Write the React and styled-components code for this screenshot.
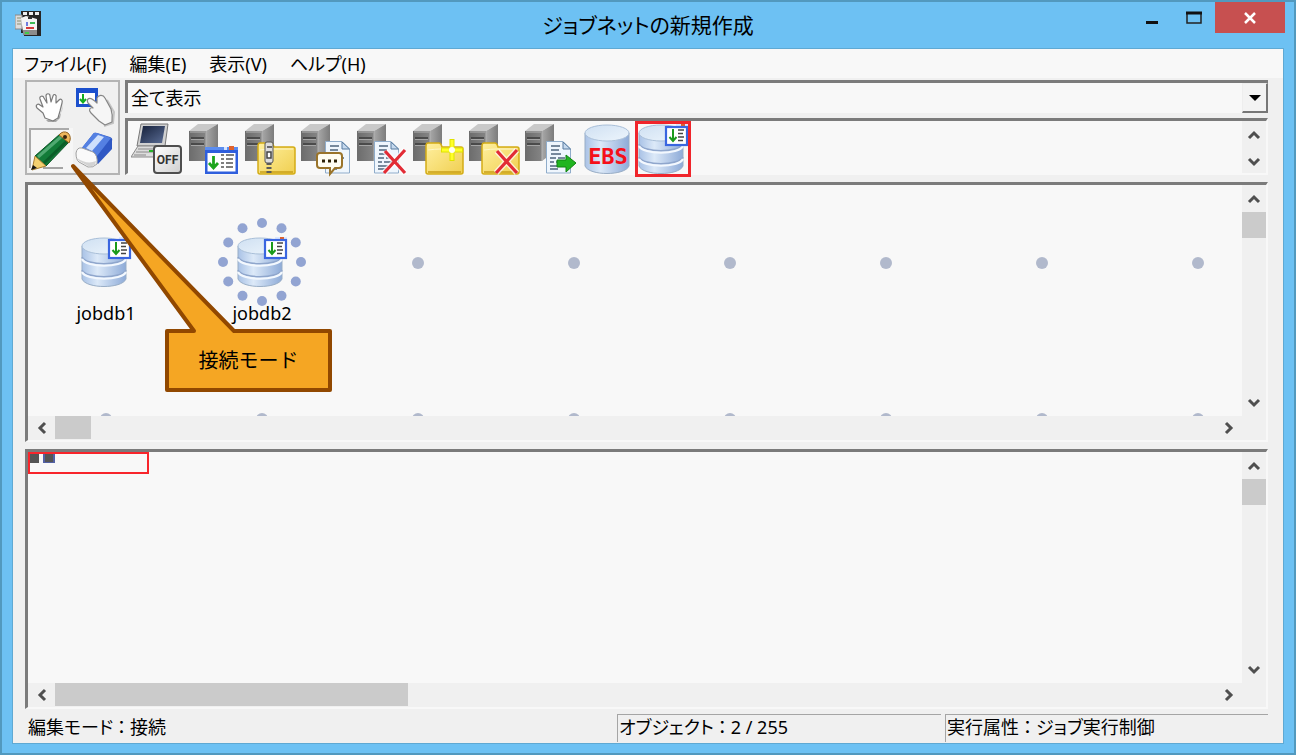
import React, { useState } from 'react';
import styled, { createGlobalStyle, css } from 'styled-components';

const GlobalStyle = createGlobalStyle`
    * {
        box-sizing : border-box;
    }

    body {
        margin : 0;
        font-family : 'Noto Sans', 'Noto Sans CJK JP', sans-serif;
        font-size : 18px;
        line-height : 24px;
        color : #000;
        font-feature-settings : 'palt';
    }

    button, select {
        margin : 0;
        padding : 0;
        border : 0;
        border-radius : 0;
        background : none;
        color : inherit;
        font : inherit;
        font-feature-settings : inherit;
    }

    svg {
        display : block;
    }
`;

const menus = ['ファイル(F)', '編集(E)', '表示(V)', 'ヘルプ(H)'];
const COLUMNS = 8;
const RING = Array.from({ length: 12 }, (_, i) => (i * Math.PI) / 6);

/* ---------- icons ---------- */

const Gradients = () => (
    <DefsSvg aria-hidden="true">
        <defs>
            <linearGradient id="side" x1="0" x2="1"><stop offset="0" stopColor="#a8a8a8" /><stop offset="1" stopColor="#7c7c7c" /></linearGradient>
            <linearGradient id="front" x1="0" x2="1"><stop offset="0" stopColor="#6c6c6c" /><stop offset="1" stopColor="#858585" /></linearGradient>
            <linearGradient id="folder" x1="0" x2="1" y2="1"><stop offset="0" stopColor="#fff0a0" /><stop offset="1" stopColor="#f0cf50" /></linearGradient>
            <linearGradient id="disk" x1="0" x2="1"><stop offset="0" stopColor="#a9c2e6" /><stop offset="0.35" stopColor="#dce9f8" /><stop offset="1" stopColor="#8eabd8" /></linearGradient>
            <linearGradient id="diskTop" x1="0" x2="1" y2="1"><stop offset="0" stopColor="#cfe0f2" /><stop offset="1" stopColor="#edf5fc" /></linearGradient>
            <linearGradient id="screen" x1="0" x2="1" y2="1"><stop offset="0" stopColor="#15203a" /><stop offset="1" stopColor="#5a6c94" /></linearGradient>
            <linearGradient id="key" x1="0" x2="1" y2="1"><stop offset="0" stopColor="#ffffff" /><stop offset="1" stopColor="#cfcfcf" /></linearGradient>
        </defs>
    </DefsSvg>
);

const Server = () => (
    <g>
        <path d="M2 10 11 3H31L19 10Z" fill="#c9c9c9" />
        <path d="M19 10 31 3V31L19 40Z" fill="url(#side)" />
        <path d="M2 10H19V40H2Z" fill="url(#front)" />
        <path d="M3 11H18M19 10V40" stroke="#b2b2b2" />
        <path d="M4 17H17M4 23H17" stroke="#3c3c3c" strokeWidth="1.4" />
        <path d="M4 18.5H17M4 24.5H17" stroke="#a5a5a5" />
    </g>
);

const JobWindow = () => (
    <g transform="translate(18 25)">
        <path d="M0 1H33V28H0Z" fill="#2f5fdd" />
        <path d="M0 1H33V4H0Z" fill="#5b8df0" />
        <path d="M19 1H22V4H19Z" fill="#d7e5ff" />
        <path d="M24 0H29V4H24Z" fill="#e0622c" />
        <path d="M2.5 7H30.5V25.5H2.5Z" fill="#fff" />
        <path d="M8.5 10V21M4 17 8.5 22 13 17" fill="none" stroke="#1da51d" strokeWidth="2.8" />
        <path d="M16 9H19M21 9H29M16 13H19M21 13H28M16 17H19M21 17H28M16 21H19M21 21H28" stroke="#555" strokeWidth="1.5" />
    </g>
);

const SmallWindow = () => (
    <g transform="translate(30 3)">
        <path d="M11 0H23V3H11Z" fill="#dbe7ff" />
        <path d="M16 0H20V2H16Z" fill="#e0622c" />
        <rect x="1" y="3" width="21" height="18" fill="#fff" stroke="#3a66e0" strokeWidth="2.2" />
        <path d="M8 5V16M4.500 13 8 17 11.500 13" fill="none" stroke="#1a9a1a" strokeWidth="2" />
        <path d="M13 6H19M13 9.500H18M13 13H19M13 16.500H18" stroke="#444" strokeWidth="1.6" />
    </g>
);

const Folder = () => (
    <g>
        <path d="M15 25Q15 22 17 22H28Q30 22 31 26H50Q52 26 52 28V51Q52 53 50 53H17Q15 53 15 51Z" fill="url(#folder)" stroke="#d3ac16" strokeWidth="1.5" />
        <path d="M17 29Q24 28 30 28H50" fill="none" stroke="#fff7c8" />
        <path d="M17 51H50" stroke="#c89f18" strokeWidth="1.5" />
    </g>
);

const Paper = ({ x }) => (
    <g transform={`translate(${x} 20)`}>
        <path d="M.5 .5H17L24.5 8V32H.5Z" fill="#eff6fd" stroke="#8facca" />
        <path d="M17 1V8H24.5Z" fill="#c5d9ee" stroke="#587b9f" />
        <path d="M5 5H14M5 9H13M5 13H15M4 17H10M12 17H19M4 21H8M10 21H18M4 25H14M4 28H12" stroke="#50657c" strokeWidth="1.3" />
    </g>
);

const Cross = () => (
    <g>
        <path d="M30 30 50 52M50 29 29 52" stroke="#fff" strokeWidth="6" opacity=".7" />
        <path d="M30 30 50 52M50 29 29 52" stroke="#e22c36" strokeWidth="3.2" />
    </g>
);

const Cylinder = ({ x, y, layered }) => (
    <g transform={`translate(${x} ${y})`}>
        <path d="M0 8V41C4 51 40 51 44 41V8Z" fill="url(#disk)" stroke="#99aec6" />
        {layered && (
            <>
                <path d="M0 19C4 28 40 28 44 19M0 32C4 41 40 41 44 32" fill="none" stroke="#8fa6cc" strokeWidth="1.6" />
                <path d="M0 21C4 30 40 30 44 21M0 34C4 43 40 43 44 34" fill="none" stroke="#f3f8fe" strokeWidth="2.2" />
            </>
        )}
        <ellipse cx="22" cy="8" rx="22" ry="8" fill="url(#diskTop)" stroke="#a9bfd8" />
    </g>
);

const Database = () => (
    <g>
        <Cylinder x={4} y={4} layered />
        <SmallWindow />
    </g>
);

const LaptopOff = () => (
    <g>
        <path d="M10 3H37L34 25H6Z" fill="#d1d1d1" stroke="#777" />
        <path d="M12 5H34L31 22H9Z" fill="url(#screen)" />
        <path d="M7 25H32L28 36H0Z" fill="#dcdcdc" stroke="#8a8a8a" />
        <path d="M7 28H25M5 31H23M3 34H15" stroke="#a5a5a5" strokeWidth="1.5" />
        <path d="M18 30H22" stroke="#27b427" strokeWidth="2" />
        <rect x="23" y="25" width="27" height="27" rx="3" fill="url(#key)" stroke="#4e4e4e" strokeWidth="2" />
        <text x="36.5" y="43" textAnchor="middle" fontSize="12" fontWeight="700" fill="#333" fontFamily="Roboto, sans-serif">OFF</text>
    </g>
);

const Zip = () => (
    <g>
        <path d="M26 22V53" stroke="#5b5b5b" strokeWidth="5" strokeDasharray="2 2" />
        <rect x="22" y="21" width="8" height="21" rx="2" fill="#ddd" stroke="#555" />
        <path d="M24 26H29M24 31V37H28V31Z" fill="#fff" stroke="#444" strokeWidth="1.5" />
    </g>
);

const Bubble = () => (
    <g>
        <path d="M21 32H40Q43 32 43 35V44Q43 47 40 47H36L31 53V47H21Q18 47 18 44V35Q18 32 21 32Z" fill="#fffdf2" stroke="#9a742a" strokeWidth="2" />
        <path d="M23 40H26M29 40H32M35 40H38" stroke="#2c2006" strokeWidth="3" />
    </g>
);

const Sparkle = () => (
    <g>
        <path d="M41 18V40M30 29H52" stroke="#dfe200" strokeWidth="5" />
        <path d="M41 19V39M31 29H51" stroke="#ffff28" strokeWidth="3" />
        <circle cx="41" cy="29" r="3" fill="#fffff0" />
    </g>
);

const palette = [
    { name: '停止マシン', icon: <LaptopOff /> },
    { name: 'ジョブ', icon: <g><Server /><JobWindow /></g> },
    { name: '圧縮', icon: <g><Server /><Folder /><Zip /></g> },
    { name: 'メッセージ', icon: <g><Server /><Paper x={26} /><Bubble /></g> },
    { name: 'ファイル削除', icon: <g><Server /><Paper x={19} /><Cross /></g> },
    { name: 'フォルダ作成', icon: <g><Server /><Folder /><Sparkle /></g> },
    { name: 'フォルダ削除', icon: <g><Server /><Folder /><Cross /></g> },
    { name: 'ファイル転送', icon: <g><Server /><Paper x={23} /><path d="M34 39H43V34L53 42 43 51V46H34Z" fill="#20b520" stroke="#118311" /></g> },
    {
        name: 'EBS',
        icon: (
            <g>
                <Cylinder x={6} y={4} />
                <text x="29" y="43" textAnchor="middle" fontSize="22" fontWeight="700" fill="#f5101a" fontFamily="'DejaVu Sans Mono', monospace">EBS</text>
            </g>
        ),
    },
    { name: 'データベース', icon: <Database /> },
];

const tools = [
    {
        name: '移動',
        icon: (
            <g>
                <path d="M17 35 28 35 33 26 34 19 31 33 27 37 19 37Z" fill="#a9a9a9" />
                <path d="M16 33 14 28 8 23C6 20 9 18 11 20L14 22 11 14C10 11 14 10 15 13L18 18 17 11C17 8 21 8 21 11L22 17 24 11C25 8 28 10 27 13L27 18 30 15C32 13 34 15 33 18L31 26 29 33 24 36Z" fill="#fff" stroke="#7b7b7b" strokeWidth="1.2" strokeLinejoin="round" />
            </g>
        ),
    },
    {
        name: '選択',
        icon: (
            <g>
                <rect x="3" y="3" width="22" height="19" fill="#1c50cd" />
                <rect x="6" y="8" width="16" height="11" fill="#fff" />
                <path d="M10 9V17M7 14 10 17.5 13 14" stroke="#14ac22" strokeWidth="2" fill="none" />
                <path d="M34 15 41 27 40 38 31 41" fill="none" stroke="#c4c4c4" strokeWidth="2" />
                <path d="M15 14C17 12 20 14 24 18L24 13C25 10 30 9 32 13L38 24Q40 30 39 37L32 40 26 36 18 28C15 25 17 22 20 23L15 18C14 16 14 15 15 14Z" fill="#f6f6f6" stroke="#858585" strokeWidth="1.2" strokeLinejoin="round" />
            </g>
        ),
    },
    {
        name: '接続',
        icon: (
            <g>
                <path d="M14 39H34" stroke="#a4a4a4" strokeWidth="2" />
                <path d="M6 27 31 5 40 13 17 37Z" fill="#137b38" stroke="#0b5425" />
                <path d="M9 28 33 7" stroke="#50a871" strokeWidth="3" />
                <path d="M15 34 38 12" stroke="#0c5e29" strokeWidth="3" />
                <path d="M30 6Q34 1 39 4Q43 8 40 14Z" fill="#edb65b" stroke="#93601c" />
                <circle cx="36" cy="8" r="2" fill="#3b250d" />
                <path d="M6 27 17 37 3 41Z" fill="#f4d070" stroke="#a87e32" />
                <path d="M4 36 8 39 2 41Z" fill="#161616" />
            </g>
        ),
    },
    {
        name: '削除',
        icon: (
            <g>
                <path d="M8 20 20 5Q21 3 24 4L37 8Q40 9 39 12V20L25 35 18 30Z" fill="#2f58c4" />
                <path d="M8 20 20 5Q21 3 24 4L38 9 24 27Z" fill="#5480e2" />
                <path d="M13 19 25 6 31 8 19 22Z" fill="#cfe0fc" />
                <path d="M3 24Q4 18 9 19L20 23Q25 26 24 35Q20 39 15 38L6 33Q3 31 3 24Z" fill="#fafafa" stroke="#a1a1a1" />
                <path d="M4 29Q14 36 23 32L22 36Q18 38 15 37L6 32Z" fill="#d3d3d3" />
            </g>
        ),
    },
];

const AppIcon = () => (
    <svg width="26" height="26" viewBox="0 0 26 26" aria-hidden="true">
        <path d="M6 0H26V25H9V22H6Z" fill="#262626" />
        <path d="M8 1H12V4H8ZM14 1H18V4H14ZM20 1H24V4H20Z" fill="#efefef" />
        <path d="M0 4H7V18H0Z" fill="#dcdcdc" stroke="#888" />
        <path d="M2 7H6M2 10H6M2 13H6" stroke="#8a8f70" />
        <path d="M6 7 11 5 22 8V20L8 21Z" fill="#f4f4f4" />
        <path d="M13 7H17" stroke="#333" strokeWidth="2" />
        <path d="M15 12H20" stroke="#3eba55" strokeWidth="2" />
        <path d="M11 13H13" stroke="#6f7de0" strokeWidth="4" />
        <path d="M11 17H19" stroke="#d33b3b" strokeWidth="2" />
        <path d="M8 19H22V24H8Z" fill="#8c8c8c" />
        <path d="M10 22H14" stroke="#41ca48" strokeWidth="2" />
    </svg>
);

const Chevron = ({ turn = 0 }) => (
    <svg width="16" height="16" viewBox="0 0 16 16" aria-hidden="true">
        <path d="M3 11 8 6 13 11" fill="none" stroke="#4f4f4f" strokeWidth="3" transform={`rotate(${turn} 8 8)`} />
    </svg>
);

/* ---------- parts ---------- */

const VerticalBar = ({ thumb }) => (
    <VBar>
        <ScrollButton type="button" aria-label="上へ"><Chevron /></ScrollButton>
        <Track>{thumb && <VThumb />}</Track>
        <ScrollButton type="button" aria-label="下へ"><Chevron turn={180} /></ScrollButton>
    </VBar>
);

const HorizontalBar = ({ length }) => (
    <HBar>
        <ScrollButton type="button" aria-label="左へ"><Chevron turn={-90} /></ScrollButton>
        <Track><HThumb $length={length} /></Track>
        <ScrollButton type="button" aria-label="右へ"><Chevron turn={90} /></ScrollButton>
    </HBar>
);

const JobNode = ({ label, active }) => (
    <Node>
        <NodeSvg viewBox="0 0 56 56" aria-hidden="true">
            {active && RING.map((a) => (
                <circle key={a} cx={28 + 39 * Math.cos(a)} cy={28 + 39 * Math.sin(a)} r="5" fill="#92a4d2" />
            ))}
            <Database />
        </NodeSvg>
        <NodeLabel>{label}</NodeLabel>
    </Node>
);

const Status = ({ name, value, sunken }) => (
    <StatusText $sunken={sunken}>{name}<Colon>：</Colon>{value}</StatusText>
);

const App = () => {
    const [tool, setTool] = useState(2);
    const [part, setPart] = useState(9);

    return (
        <WindowFrame>
            <GlobalStyle />
            <Gradients />
            <TitleBar>
                <TitleIcon><AppIcon /></TitleIcon>
                <Title>ジョブネットの新規作成</Title>
                <WindowButtons>
                    <WindowButton type="button" aria-label="最小化">
                        <svg width="16" height="16" viewBox="0 0 16 16"><path d="M2 12.5H14" stroke="#111" strokeWidth="3" /></svg>
                    </WindowButton>
                    <WindowButton type="button" aria-label="最大化">
                        <svg width="16" height="16" viewBox="0 0 16 16"><path d="M1 3V13H15V3" fill="none" stroke="#222" strokeWidth="1.5" /><path d="M0 3H16" stroke="#111" strokeWidth="3" /></svg>
                    </WindowButton>
                    <WindowButton type="button" aria-label="閉じる" $close>
                        <svg width="14" height="14" viewBox="0 0 14 14"><path d="M2 2 12 12M12 2 2 12" stroke="#fff" strokeWidth="2.5" /></svg>
                    </WindowButton>
                </WindowButtons>
            </TitleBar>
            <Client>
                <MenuBar>
                    {menus.map((menu) => <button type="button" key={menu}>{menu}</button>)}
                </MenuBar>
                <Workspace>
                    <ToolArea>
                        <ToolPad>
                            {tools.map((item, i) => (
                                <ToolButton type="button" key={item.name} aria-label={item.name} $pressed={tool === i} onClick={() => setTool(i)}>
                                    <svg width="42" height="42" viewBox="0 0 42 42">{item.icon}</svg>
                                </ToolButton>
                            ))}
                        </ToolPad>
                        <PaletteArea>
                            <SelectBox>
                                <select aria-label="表示" defaultValue="all">
                                    <option value="all">全て表示</option>
                                </select>
                                <SelectArrow aria-hidden="true">
                                    <svg width="12" height="6" viewBox="0 0 12 6"><path d="M0 0H12L6 6Z" fill="#000" /></svg>
                                </SelectArrow>
                            </SelectBox>
                            <Palette>
                                <PaletteItems>
                                    {palette.map((item, i) => (
                                        <PaletteButton type="button" key={item.name} aria-label={item.name} $selected={part === i} onClick={() => setPart(i)}>
                                            <svg width="56" height="56" viewBox="0 0 56 56">{item.icon}</svg>
                                        </PaletteButton>
                                    ))}
                                </PaletteItems>
                                <VerticalBar />
                            </Palette>
                        </PaletteArea>
                    </ToolArea>
                    <Pane>
                        <Canvas>
                            <JobNode label="jobdb1" />
                            <JobNode label="jobdb2" active />
                            {Array.from({ length: COLUMNS * 2 - 2 }, (_, i) => <GridPoint key={i}><Dot /></GridPoint>)}
                        </Canvas>
                        <VerticalBar thumb />
                        <HorizontalBar length="36px" />
                    </Pane>
                    <Pane>
                        <Overview>
                            <ViewPort>
                                <MiniNode />
                                <MiniNode $active />
                            </ViewPort>
                        </Overview>
                        <VerticalBar thumb />
                        <HorizontalBar length="30.4%" />
                    </Pane>
                </Workspace>
                <StatusBar>
                    <Status name="編集モード" value="接続" />
                    <Status name="オブジェクト" value="2 / 255" sunken />
                    <Status name="実行属性" value="ジョブ実行制御" sunken />
                </StatusBar>
                <Callout>
                    <svg width="262" height="230" viewBox="0 0 262 230" aria-hidden="true">
                        <path d="M97 169H124L3 4 164 169H260V228H97Z" fill="#f5a623" stroke="#914800" strokeWidth="4" strokeLinejoin="round" />
                    </svg>
                    <CalloutText>接続モード</CalloutText>
                </Callout>
            </Client>
        </WindowFrame>
    );
};

export default App;

const DefsSvg = styled.svg`
    position : absolute;
    width : 0;
    height : 0;
`;

const WindowFrame = styled.div`
    display : flex;
    flex-direction : column;
    height : 100vh;
    padding : 0 10px 9px;
    border : 2px solid #5299be;
    background : #6dc1f3;
`;

const TitleBar = styled.header`
    display : grid;
    grid-template-columns : 1fr auto 1fr;
    flex : none;
    height : 46px;
`;

const TitleIcon = styled.div`
    padding : 9px 3px;
`;

const Title = styled.h1`
    align-self : center;
    margin : 0;
    font-size : 21px;
    font-weight : 400;
`;

const WindowButtons = styled.div`
    display : flex;
    justify-content : flex-end;
    align-items : flex-start;
    margin-right : -1px;
`;

const WindowButton = styled.button`
    display : flex;
    align-items : center;
    justify-content : center;
    width : 42px;
    height : 31px;

    ${({ $close }) => $close && css`
        width : 70px;
        background : #c75050;
    `}
`;

const Client = styled.main`
    position : relative;
    display : flex;
    flex-direction : column;
    flex : 1;
    min-height : 0;
    border : 1px solid #5fa9d3;
    background : #f0f0f0;
`;

const MenuBar = styled.nav`
    display : flex;
    flex : none;
    gap : 23px;
    height : 29px;
    padding : 2px 11px;
    background : #f8f8f8;
`;

const Workspace = styled.div`
    display : flex;
    flex-direction : column;
    flex : 1;
    gap : 7px;
    min-height : 0;
    padding : 2px 15px 0 12px;
`;

const ToolArea = styled.div`
    display : flex;
    flex : none;
    gap : 5px;
    height : 95px;
`;

const ToolPad = styled.div`
    display : grid;
    grid-template-columns : 44px 44px;
    grid-template-rows : 44px 44px;
    place-content : center;
    flex : none;
    width : 95px;
    border : 2px solid #b4b4b4;
`;

const ToolButton = styled.button`
    width : 44px;
    height : 44px;

    ${({ $pressed }) => $pressed && css`
        background :
            linear-gradient(#aaa, #aaa) 0 0 / 40px 2px no-repeat,
            linear-gradient(#aaa, #aaa) 0 0 / 2px 40px no-repeat,
            #f6f6f6;
    `}
`;

const PaletteArea = styled.div`
    display : flex;
    flex-direction : column;
    flex : 1;
    gap : 5px;
    min-width : 0;
`;

const sunken = css`
    border : solid;
    border-width : 3px 2px 2px 3px;
    border-color : #7b7b7b #f8f8f8 #f8f8f8 #7b7b7b;
    background : #f8f8f8;
`;

const SelectBox = styled.div`
    ${sunken}
    display : grid;
    flex : none;
    height : 33px;
    border-right : 0;
    border-bottom : 0;

    select {
        grid-area : 1 / 1;
        appearance : none;
        padding : 0 3px;
        outline : 0;
    }
`;

const SelectArrow = styled.span`
    grid-area : 1 / 1;
    justify-self : end;
    display : flex;
    align-items : center;
    justify-content : center;
    width : 26px;
    border : solid;
    border-width : 1px 2px 2px 1px;
    border-color : #eee #777 #777 #eee;
    background : #f3f3f3;
    pointer-events : none;
`;

const Palette = styled.div`
    ${sunken}
    display : flex;
    flex : 1;
    justify-content : space-between;
    min-height : 0;
`;

const PaletteItems = styled.div`
    display : flex;
    padding-left : 3px;
`;

const PaletteButton = styled.button`
    width : 56px;
    height : 56px;
    outline : ${({ $selected }) => ($selected ? '3px solid #f0252b' : '0')};
    outline-offset : -3px;
`;

const VBar = styled.div`
    display : flex;
    flex-direction : column;
    width : 24px;
    background : #f0f0f0;
`;

const HBar = styled.div`
    display : flex;
    grid-column : 1 / -1;
    height : 24px;
    padding-right : 24px;
    background : #f0f0f0;
`;

const ScrollButton = styled.button`
    display : flex;
    align-items : center;
    justify-content : center;
    flex : none;
    width : 27px;
    height : 27px;

    ${VBar} & {
        width : 24px;
    }

    ${HBar} & {
        height : 24px;
    }
`;

const Track = styled.div`
    flex : 1;
    min-height : 0;
`;

const VThumb = styled.div`
    height : 26px;
    background : #cbcbcb;
`;

const HThumb = styled.div`
    width : ${({ $length }) => $length};
    height : 23px;
    background : #cbcbcb;
`;

const Pane = styled.section`
    ${sunken}
    display : grid;
    grid-template-columns : minmax(0, 1fr) 24px;
    grid-template-rows : minmax(0, 1fr) 24px;
    flex : 1;
    min-height : 0;
`;

const Canvas = styled.div`
    display : grid;
    grid-template-columns : repeat(${COLUMNS}, 156px);
    grid-auto-rows : 156px;
    overflow : hidden;
`;

const Node = styled.div`
    display : flex;
    flex-direction : column;
    align-items : center;
    padding-top : 49px;
`;

const NodeSvg = styled.svg`
    flex : none;
    width : 56px;
    height : 56px;
    overflow : visible;
`;

const NodeLabel = styled.span`
    position : relative;
    margin-top : 11px;
`;

const GridPoint = styled.div`
    display : grid;
    place-items : center;
`;

const Dot = styled.div`
    width : 12px;
    height : 12px;
    border-radius : 50%;
    background : #b1b9cc;
`;

const Overview = styled.div`
    overflow : hidden;
`;

const ViewPort = styled.div`
    display : flex;
    gap : 4px;
    width : 121px;
    height : 22px;
    border : 2px solid #f8252b;
`;

const MiniNode = styled.div`
    width : ${({ $active }) => ($active ? '12px' : '9px')};
    height : 9px;
    border : solid ${({ $active }) => ($active ? '#5361a4' : '#555')};
    border-width : 0 2px 1px;
    background : #555;
`;

const StatusBar = styled.footer`
    display : grid;
    grid-template-columns : 1fr 324px 323px;
    gap : 4px;
    flex : none;
    height : 34px;
    padding : 5px 15px 1px 12px;
`;

const StatusText = styled.div`
    padding : 1px 3px;
    white-space : nowrap;

    ${({ $sunken }) => $sunken && css`
        padding : 0 1px;
        border-top : 1px solid #a5a5a5;
        border-left : 1px solid #a5a5a5;
    `}
`;

const Colon = styled.span`
    margin : 0 4px;
`;

const Callout = styled.div`
    position : absolute;
    top : 113px;
    left : 57px;
    pointer-events : none;
`;

const CalloutText = styled.div`
    position : absolute;
    right : 2px;
    bottom : 2px;
    width : 163px;
    font-size : 20px;
    line-height : 58px;
    text-align : center;
    font-feature-settings : normal;
`;
